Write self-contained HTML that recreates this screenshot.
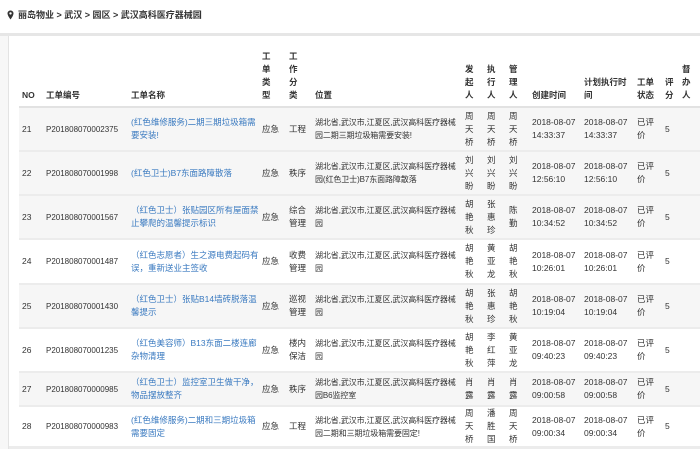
<!DOCTYPE html>
<html><head><meta charset="utf-8"><style>
*{margin:0;padding:0;box-sizing:border-box}
body{width:700px;height:449px;overflow:hidden;background:#fff;font-family:"Liberation Sans","Noto Sans CJK SC",sans-serif;font-size:8.5px;color:#333;position:relative}
.bc{position:absolute;left:7px;top:9px;font-size:9px;color:#333;font-weight:bold;line-height:13px}
.bc svg{vertical-align:-2px;margin-right:4px}
.topline{position:absolute;left:0;top:33px;width:700px;height:3px;background:#e6e6e6}
.lp{position:absolute;left:0;top:36px;width:9px;height:413px;background:#f7f7f7;border-right:1px solid #e3e3e3}
.bot{position:absolute;left:9px;top:446px;width:691px;height:3px;background:#ececec}
table{position:absolute;left:19px;top:36px;border-collapse:collapse;table-layout:fixed;width:681px}
td,th{padding:0 0 0 3px;vertical-align:middle;line-height:13px;text-align:left;white-space:nowrap;overflow:hidden}
td.n{font-size:8px}
td.l{font-size:8px;letter-spacing:-0.1px}
th{font-weight:bold;vertical-align:bottom;padding-bottom:4px;height:71px;border-bottom:2px solid #e2e2e2}
tr.g td{background:#f6f6f6}
tr.r td{border-top:2px solid #ececec}
a{color:#3a7ac0;text-decoration:none}
</style></head><body>
<div class="bc"><svg width="7" height="10" viewBox="0 0 7 10"><path d="M3.5 0.5C1.8 0.5 0.5 1.8 0.5 3.4c0 2.3 3 6.1 3 6.1s3-3.8 3-6.1C6.5 1.8 5.2 0.5 3.5 0.5z" fill="#333"/><circle cx="3.5" cy="3.4" r="1.2" fill="#fff"/></svg>丽岛物业 &gt; 武汉 &gt; 园区 &gt; 武汉高科医疗器械园</div>
<div class="topline"></div>
<div class="lp"></div>
<table>
<colgroup><col style="width:24px"><col style="width:85px"><col style="width:131px"><col style="width:27px"><col style="width:26px"><col style="width:150px"><col style="width:22px"><col style="width:22px"><col style="width:23px"><col style="width:52px"><col style="width:53px"><col style="width:28px"><col style="width:17px"><col style="width:21px"></colgroup>
<tr><th>NO</th><th>工单编号</th><th>工单名称</th><th>工<br>单<br>类<br>型</th><th>工<br>作<br>分<br>类</th><th>位置</th><th>发<br>起<br>人</th><th>执<br>行<br>人</th><th>管<br>理<br>人</th><th>创建时间</th><th>计划执行时<br>间</th><th>工单<br>状态</th><th>评<br>分</th><th>督<br>办<br>人</th></tr>
<tr class="g" style="height:44px"><td>21</td><td class="n">P201808070002375</td><td><a>(红色维修服务)二期三期垃圾箱需<br>要安装!</a></td><td>应急</td><td>工程</td><td class="l">湖北省,武汉市,江夏区,武汉高科医疗器械<br>园二期三期垃圾箱需要安装!</td><td>周<br>天<br>桥</td><td>周<br>天<br>桥</td><td>周<br>天<br>桥</td><td>2018-08-07<br>14:33:37</td><td>2018-08-07<br>14:33:37</td><td>已评<br>价</td><td>5</td><td></td></tr>
<tr class="g r" style="height:44px"><td>22</td><td class="n">P201808070001998</td><td><a>(红色卫士)B7东面路障散落</a></td><td>应急</td><td>秩序</td><td class="l">湖北省,武汉市,江夏区,武汉高科医疗器械<br>园(红色卫士)B7东面路障散落</td><td>刘<br>兴<br>盼</td><td>刘<br>兴<br>盼</td><td>刘<br>兴<br>盼</td><td>2018-08-07<br>12:56:10</td><td>2018-08-07<br>12:56:10</td><td>已评<br>价</td><td>5</td><td></td></tr>
<tr class="g r" style="height:44px"><td>23</td><td class="n">P201808070001567</td><td><a>（红色卫士）张贴园区所有屋面禁<br>止攀爬的温馨提示标识</a></td><td>应急</td><td>综合<br>管理</td><td class="l">湖北省,武汉市,江夏区,武汉高科医疗器械<br>园</td><td>胡<br>艳<br>秋</td><td>张<br>惠<br>珍</td><td>陈<br>勤</td><td>2018-08-07<br>10:34:52</td><td>2018-08-07<br>10:34:52</td><td>已评<br>价</td><td>5</td><td></td></tr>
<tr class="r" style="height:45px"><td>24</td><td class="n">P201808070001487</td><td><a>（红色志愿者）生之源电费起码有<br>误，重新送业主签收</a></td><td>应急</td><td>收费<br>管理</td><td class="l">湖北省,武汉市,江夏区,武汉高科医疗器械<br>园</td><td>胡<br>艳<br>秋</td><td>黄<br>亚<br>龙</td><td>胡<br>艳<br>秋</td><td>2018-08-07<br>10:26:01</td><td>2018-08-07<br>10:26:01</td><td>已评<br>价</td><td>5</td><td></td></tr>
<tr class="g r" style="height:44px"><td>25</td><td class="n">P201808070001430</td><td><a>（红色卫士）张贴B14墙砖脱落温<br>馨提示</a></td><td>应急</td><td>巡视<br>管理</td><td class="l">湖北省,武汉市,江夏区,武汉高科医疗器械<br>园</td><td>胡<br>艳<br>秋</td><td>张<br>惠<br>珍</td><td>胡<br>艳<br>秋</td><td>2018-08-07<br>10:19:04</td><td>2018-08-07<br>10:19:04</td><td>已评<br>价</td><td>5</td><td></td></tr>
<tr class="r" style="height:44px"><td>26</td><td class="n">P201808070001235</td><td><a>（红色美容师）B13东面二楼连廊<br>杂物清理</a></td><td>应急</td><td>楼内<br>保洁</td><td class="l">湖北省,武汉市,江夏区,武汉高科医疗器械<br>园</td><td>胡<br>艳<br>秋</td><td>李<br>红<br>萍</td><td>黄<br>亚<br>龙</td><td>2018-08-07<br>09:40:23</td><td>2018-08-07<br>09:40:23</td><td>已评<br>价</td><td>5</td><td></td></tr>
<tr class="g r" style="height:34px"><td>27</td><td class="n">P201808070000985</td><td><a>（红色卫士）监控室卫生做干净，<br>物品摆放整齐</a></td><td>应急</td><td>秩序</td><td class="l">湖北省,武汉市,江夏区,武汉高科医疗器械<br>园B6监控室</td><td>肖<br>露</td><td>肖<br>露</td><td>肖<br>露</td><td>2018-08-07<br>09:00:58</td><td>2018-08-07<br>09:00:58</td><td>已评<br>价</td><td>5</td><td></td></tr>
<tr class="r" style="height:39px"><td>28</td><td class="n">P201808070000983</td><td><a>(红色维修服务)二期和三期垃圾箱<br>需要固定</a></td><td>应急</td><td>工程</td><td class="l">湖北省,武汉市,江夏区,武汉高科医疗器械<br>园二期和三期垃圾箱需要固定!</td><td>周<br>天<br>桥</td><td>潘<br>胜<br>国</td><td>周<br>天<br>桥</td><td>2018-08-07<br>09:00:34</td><td>2018-08-07<br>09:00:34</td><td>已评<br>价</td><td>5</td><td></td></tr>
</table>
<div class="bot"></div>
</body></html>
